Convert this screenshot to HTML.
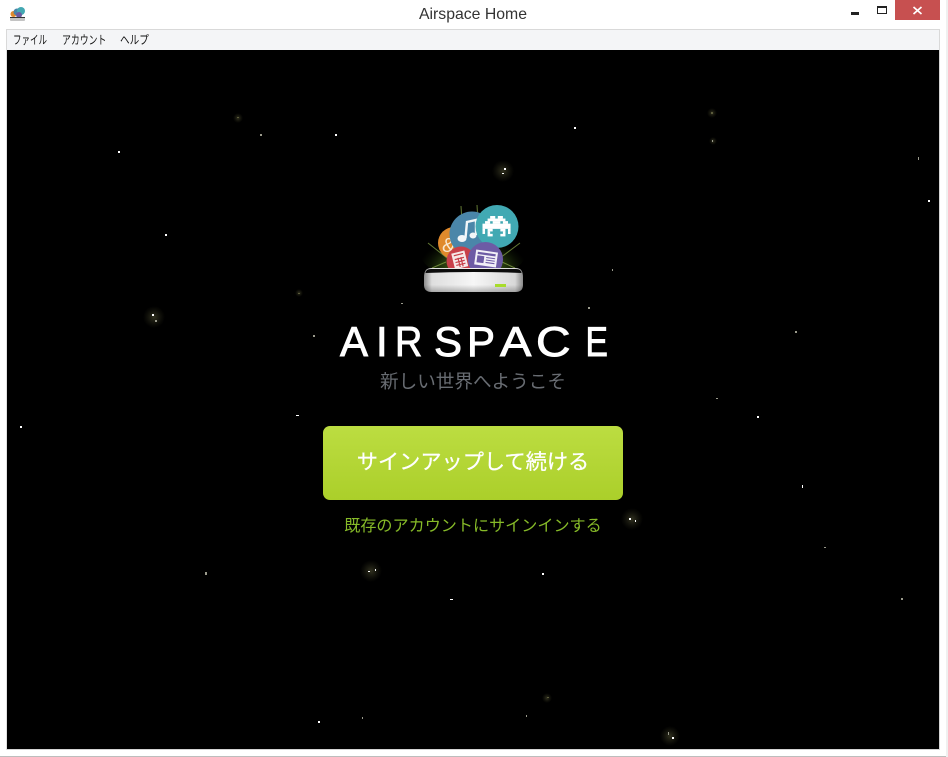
<!DOCTYPE html>
<html lang="ja">
<head>
<meta charset="utf-8">
<title>Airspace Home</title>
<style>
html,body{margin:0;padding:0;background:#fff;}
body{width:948px;height:757px;position:relative;overflow:hidden;font-family:"Liberation Sans","Noto Sans CJK JP",sans-serif;}
.a{position:absolute;white-space:nowrap;}
#title{left:0;width:946px;top:6px;text-align:center;font-size:15.8px;line-height:18px;color:#333;}
#close{left:895px;top:0;width:45px;height:20px;background:#c75050;}
#menubar{left:6px;top:29px;background:#f4f5f7;border:1px solid #d9d9d9;border-bottom:0;box-sizing:border-box;width:934px;height:21px;}
.m{font-size:12px;line-height:14px;top:33px;color:#111;transform-origin:0 50%;}
#main{left:7px;top:50px;width:932px;height:699px;background:#000;}
#edgeb{left:6px;top:749px;width:934px;height:1px;background:#d4d4d4;}
#edgel{left:6px;top:50px;width:1px;height:700px;background:#e0e0e0;}
#edger{left:939px;top:50px;width:1px;height:700px;background:#d4d4d4;}
#bot{left:0;top:756px;width:948px;height:1px;background:#bdbdbd;}
#right{left:946px;top:0;width:2px;height:757px;background:#f0f0f0;}
#sub{left:323px;width:300px;top:370px;text-align:center;font-size:18.6px;line-height:24px;color:#686c72;}
#btn{left:323px;top:426px;width:300px;height:74px;border-radius:7px;background:linear-gradient(#bcdd41,#abcf2a);color:#fff;text-align:center;font-size:21.2px;line-height:74px;font-weight:400;-webkit-text-stroke:.25px #fff;}
#link{left:323px;width:300px;top:515px;text-align:center;font-size:16.1px;line-height:22px;color:#86ba28;}
</style>
</head>
<body>
<svg class="a" style="left:9px;top:6px" width="17" height="16" viewBox="0 0 17 16">
<circle cx="4.5" cy="8" r="3" fill="#e08a2c"/><circle cx="8" cy="6" r="3.5" fill="#4a83a8"/><circle cx="12" cy="5" r="4" fill="#43a8b2"/><circle cx="10" cy="9" r="3" fill="#6a5aa0"/>
<rect x="1" y="11" width="15" height="4" rx="1" fill="#c4c4c4"/><rect x="1" y="11" width="15" height="1" fill="#333"/>
</svg>
<div class="a" id="title">Airspace Home</div>
<svg class="a" style="left:850px;top:5px" width="40" height="12" viewBox="0 0 40 12">
<rect x="1" y="7" width="8" height="3" fill="#222"/>
<rect x="27.5" y="1.5" width="9" height="7" fill="none" stroke="#222" stroke-width="1"/><rect x="27" y="1" width="10" height="2" fill="#222"/>
</svg>
<div class="a" id="close"></div>
<svg class="a" style="left:912px;top:5px" width="12" height="10" viewBox="0 0 12 10"><path d="M1.5 2L9.5 9M9.5 2L1.5 9" stroke="#fff" stroke-width="1.7" fill="none"/></svg>
<div class="a" id="menubar"></div>
<div class="a m" style="left:13px;transform:scaleX(.71)">ファイル</div>
<div class="a m" style="left:62px;transform:scaleX(.74)">アカウント</div>
<div class="a m" style="left:120px;transform:scaleX(.8)">ヘルプ</div>
<div class="a" id="main"></div>
<div class="a" id="edgeb"></div><div class="a" id="edgel"></div><div class="a" id="edger"></div>
<div class="a" id="bot"></div><div class="a" id="right"></div>

<svg class="a" style="left:7px;top:50px" width="932" height="699" viewBox="7 50 932 699">
<defs>
<radialGradient id="g"><stop offset="0" stop-color="#5a5a3a" stop-opacity=".55"/><stop offset="1" stop-color="#3a3a20" stop-opacity="0"/></radialGradient>
<radialGradient id="glow" cx=".5" cy=".8"><stop offset="0" stop-color="#9cc232" stop-opacity=".8"/><stop offset=".6" stop-color="#466a1c" stop-opacity=".5"/><stop offset="1" stop-color="#1a2a08" stop-opacity="0"/></radialGradient>
<linearGradient id="dev" x1="0" x2="1" y1="0" y2="0"><stop offset="0" stop-color="#8c8c8c"/><stop offset=".08" stop-color="#dedede"/><stop offset=".5" stop-color="#f6f6f6"/><stop offset=".92" stop-color="#d8d8d8"/><stop offset="1" stop-color="#8a8a8a"/></linearGradient>
<linearGradient id="devv" x1="0" x2="0" y1="0" y2="1"><stop offset="0" stop-color="#000" stop-opacity="0"/><stop offset=".7" stop-color="#000" stop-opacity="0"/><stop offset="1" stop-color="#000" stop-opacity=".25"/></linearGradient>
</defs>
<g fill="url(#g)">
<circle cx="503" cy="171" r="11"/><circle cx="154" cy="317" r="11"/><circle cx="632" cy="519" r="11"/><circle cx="371" cy="571" r="11"/><circle cx="670" cy="736" r="10"/>
<circle cx="238" cy="118" r="5"/><circle cx="712" cy="113" r="5"/><circle cx="713" cy="141" r="4"/><circle cx="547" cy="698" r="5"/><circle cx="299" cy="293" r="4"/>
</g>
<g fill="#fff">
<rect x="118" y="151" width="2" height="2"/><rect x="165" y="234" width="2" height="2"/><rect x="20" y="426" width="2" height="2"/><rect x="335" y="134" width="2" height="2"/>
<rect x="574" y="127" width="2" height="2"/><rect x="504" y="168" width="2" height="2"/><rect x="502" y="173" width="2" height="1"/><rect x="152" y="314" width="2" height="2"/>
<rect x="296" y="415" width="3" height="1"/><rect x="542" y="573" width="2" height="2"/><rect x="450" y="599" width="3" height="1"/><rect x="629" y="518" width="2" height="2"/>
<rect x="635" y="520" width="1" height="2"/><rect x="368" y="571" width="2" height="1"/><rect x="375" y="569" width="1" height="2"/><rect x="802" y="485" width="1" height="3"/>
<rect x="757" y="416" width="2" height="2"/><rect x="928" y="200" width="2" height="2"/><rect x="318" y="721" width="2" height="2"/><rect x="672" y="737" width="2" height="2"/>
</g>
<g fill="#9a9a8c">
<rect x="260" y="134" width="2" height="2"/><rect x="155" y="320" width="2" height="2"/><rect x="313" y="335" width="2" height="2"/><rect x="401" y="303" width="2" height="1"/>
<rect x="588" y="307" width="2" height="2"/><rect x="612" y="269" width="1" height="2"/><rect x="716" y="398" width="2" height="1"/><rect x="795" y="331" width="2" height="2"/>
<rect x="824" y="547" width="2" height="1"/><rect x="901" y="598" width="2" height="2"/><rect x="918" y="157" width="1" height="3"/><rect x="205" y="572" width="2" height="3"/>
<rect x="362" y="717" width="1" height="2"/><rect x="526" y="715" width="1" height="2"/><rect x="668" y="732" width="1" height="3"/><rect x="712" y="140" width="1" height="2"/>
</g>
<g fill="#5c5c3c"><rect x="237" y="117" width="2" height="1"/><rect x="711" y="112" width="2" height="2"/><rect x="547" y="697" width="2" height="1"/><rect x="298" y="293" width="2" height="1"/></g>

<!-- product icon -->
<ellipse cx="473" cy="250" rx="54" ry="30" fill="url(#glow)"/>
<path d="M428 243L447 258M520 243L500 258M432 268L446 262M515 268L502 262M461 206L462 222M477 205L478 222" stroke="#8fae4c" stroke-width="1" opacity=".7" fill="none"/>
<circle cx="454" cy="243" r="16" fill="#e08a2c"/>
<text x="442" y="252" font-size="20" fill="#f8e8d0" font-family="Liberation Sans">&amp;</text>
<circle cx="472" cy="234" r="22.5" fill="#4a86a9"/>
<path d="M465.500 238L467 222L476 220V235" fill="none" stroke="#f2f6f8" stroke-width="2.400"/>
<ellipse cx="462" cy="238.500" rx="4.500" ry="3.500" fill="#f2f6f8"/><ellipse cx="473" cy="235.500" rx="3.500" ry="3" fill="#f2f6f8"/>
<circle cx="461" cy="261" r="14.500" fill="#c8404a"/>
<g transform="rotate(-14 459.500 260)"><rect x="453" y="252" width="13.500" height="16" fill="#f6e8e8"/><path d="M455 254.500H464.500M455 258.500H464.500M455 261.500H464.500M455 264.500H464.500M458.500 257.500V267M461.500 257.500V267" stroke="#c8404a" stroke-width="1.200"/></g>
<circle cx="497" cy="226.500" r="21.500" fill="#41a9b3"/>
<g transform="translate(482.500 216) scale(2.55 2.55)" fill="#fff">
<rect x="3" y="0" width="2" height="1.050"/><rect x="6" y="0" width="2" height="1.050"/>
<rect x="2" y="1" width="7" height="1.050"/>
<rect x="1" y="2" width="2" height="1.050"/><rect x="4" y="2" width="3" height="1.050"/><rect x="8" y="2" width="2" height="1.050"/>
<rect x="0" y="3" width="11" height="2.050"/>
<rect x="0" y="5" width="1" height="1.050"/><rect x="2" y="5" width="2" height="1.050"/><rect x="7" y="5" width="2" height="1.050"/><rect x="10" y="5" width="1" height="1.050"/>
<rect x="0" y="6" width="1" height="1.050"/><rect x="2" y="6" width="1" height="1.050"/><rect x="8" y="6" width="1" height="1.050"/><rect x="10" y="6" width="1" height="1.050"/>
<rect x="2" y="7" width="2" height="1"/><rect x="7" y="7" width="2" height="1"/>
</g>
<circle cx="485.500" cy="259.500" r="17.500" fill="#6d5ba5"/>
<g transform="rotate(8 486 259)"><rect x="475" y="251" width="22" height="15" fill="#f2f0f8"/><rect x="477" y="253" width="18" height="2.200" fill="#6d5ba5"/><rect x="477" y="256.500" width="7" height="7" fill="#6d5ba5"/><path d="M486 257.500H495M486 260H495M486 262.500H495" stroke="#6d5ba5" stroke-width="1.100"/></g>
<rect x="420" y="268" width="106" height="28" fill="#000"/>
<path d="M424 277Q424 268 431 268H516Q523 268 523 277V285Q523 292 515 292H432Q424 292 424 285Z" fill="url(#dev)"/>
<path d="M424 277Q424 268 431 268H516Q523 268 523 277V285Q523 292 515 292H432Q424 292 424 285Z" fill="url(#devv)"/>
<path d="M425.500 273Q426 269 431 269H516Q521 269 521.500 273Q473 271 425.500 273Z" fill="#0c0c0c"/>
<rect x="495" y="284" width="11" height="3" fill="#a8dc2c"/>

<g font-size="42" fill="#fff" stroke="#fff" stroke-width=".9" font-family="Liberation Sans">
<text y="356" x="340 376">AI</text>
<text transform="translate(395 356) scale(.9 1)">R</text>
<text y="356" x="434 467">SP</text>
<text transform="translate(500 356) scale(1.12 1)">A</text>
<text transform="translate(536 356) scale(1.14 1)">C</text>
<text transform="translate(585.500 356) scale(.8 1)">E</text>
</g>
</svg>

<div class="a" id="sub">新しい世界へようこそ</div>
<div class="a" id="btn">サインアップして続ける</div>
<div class="a" id="link">既存のアカウントにサインインする</div>
</body>
</html>
